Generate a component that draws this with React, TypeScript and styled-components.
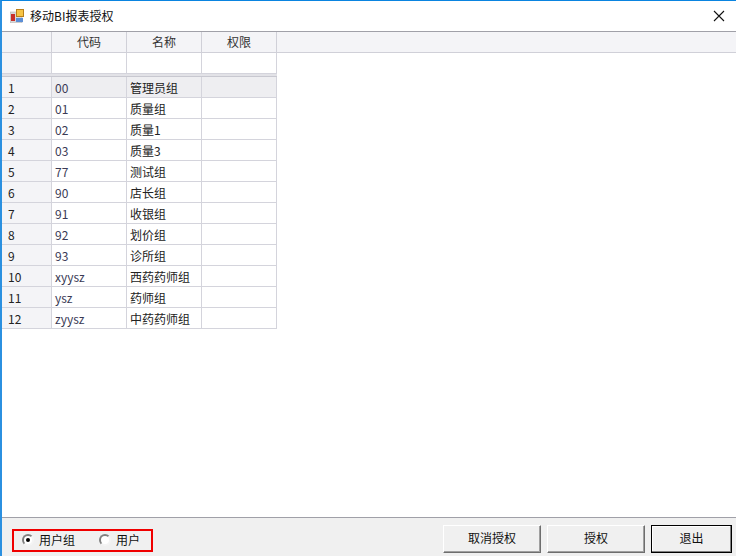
import React from "react";
import styled, { createGlobalStyle } from "styled-components";

const rows = [
  ["00", "管理员组"],
  ["01", "质量组"],
  ["02", "质量1"],
  ["03", "质量3"],
  ["77", "测试组"],
  ["90", "店长组"],
  ["91", "收银组"],
  ["92", "划价组"],
  ["93", "诊所组"],
  ["xyysz", "西药药师组"],
  ["ysz", "药师组"],
  ["zyysz", "中药药师组"],
];

const GlobalStyle = createGlobalStyle`
  html, body {
    margin: 0;
    padding: 0;
    background: #fff;
  }
  * {
    box-sizing: border-box;
  }
`;

const Window = styled.div`
  width: 736px;
  height: 556px;
  display: flex;
  flex-direction: column;
  border-top: 1px solid #0a84e0;
  border-left: 2px solid #2b90e0;
  font-family: "Noto Sans CJK SC", "Liberation Sans", sans-serif;
  font-size: 12px;
  color: #222;
  background: #fff;
  overflow: hidden;
`;

const TitleBar = styled.div`
  height: 31px;
  flex: none;
  display: flex;
  align-items: center;
  padding-left: 8px;
  padding-bottom: 1px;
  gap: 6px;
  border-bottom: 1px solid #a0a0a8;
`;

const TitleText = styled.span`
  flex: 1;
  font-size: 12px;
  color: #111;
`;

const CloseButton = styled.div`
  width: 30px;
  height: 30px;
  display: flex;
  align-items: center;
  justify-content: center;
  margin-right: 2px;
`;

const GridArea = styled.div`
  flex: 1;
  min-height: 0;
  background: #fff;
`;

const Row = styled.div`
  display: grid;
  grid-template-columns: 50px 75px 75px 75px;
  width: 275px;
  height: 21px;
`;

const HeaderRow = styled(Row)`
  width: 734px;
  grid-template-columns: 50px 75px 75px 75px 1fr;
  background: #f4f4f7;
  border-bottom: 1px solid #d0d0d8;
`;

const HeaderCell = styled.div`
  display: flex;
  align-items: center;
  justify-content: center;
  padding-bottom: 1px;
  border-right: 1px solid #d0d0d8;
  color: #333;
  &:last-child {
    border-right: none;
  }
`;

const Separator = styled.div`
  width: 275px;
  height: 3px;
  background: #e2e2e7;
  border-bottom: 1px solid #c8c8d0;
`;

const Cell = styled.div<{ $stub?: boolean; $shaded?: boolean; $code?: boolean }>`
  display: flex;
  align-items: center;
  padding-left: ${(props) => (props.$stub ? 6 : 3)}px;
  border-right: 1px solid #d4d4dc;
  border-bottom: 1px solid #d4d4dc;
  background: ${(props) =>
    props.$stub ? "#f4f4f7" : props.$shaded ? "#eeeef1" : "#fff"};
  color: ${(props) => (props.$code ? "#3a3a55" : "#222")};
  white-space: nowrap;
  overflow: hidden;
`;

const Footer = styled.div`
  height: 39px;
  flex: none;
  display: flex;
  align-items: center;
  justify-content: space-between;
  background: #f0f0f0;
  border-top: 1px solid #a0a0a8;
  padding: 0 4px 0 10px;
`;

const RadioGroup = styled.div`
  width: 141px;
  height: 23px;
  margin-top: 6px;
  display: flex;
  align-items: center;
  gap: 24px;
  padding-left: 8px;
  padding-bottom: 1px;
  border: 2px solid #f00000;
`;

const RadioLabel = styled.label`
  display: flex;
  align-items: center;
  gap: 5px;
  color: #111;
`;

const RadioDot = styled.span<{ $checked?: boolean }>`
  width: 12px;
  height: 12px;
  border-radius: 50%;
  display: flex;
  align-items: center;
  justify-content: center;
  background: #fff;
  border: 2px solid;
  border-color: #808080 #f4f4f4 #f4f4f4 #808080;
  &::after {
    content: "";
    width: 4px;
    height: 4px;
    border-radius: 50%;
    background: ${(props) => (props.$checked ? "#000" : "transparent")};
  }
`;

const Buttons = styled.div`
  display: flex;
  gap: 6px;
  margin-top: 4px;
`;

const Button = styled.div<{ $primary?: boolean }>`
  width: ${(props) => (props.$primary ? 81 : 98)}px;
  height: 28px;
  display: flex;
  align-items: center;
  justify-content: center;
  padding-bottom: 3px;
  background: #f0f0f0;
  color: #111;
  border: 1px solid;
  border-color: ${(props) =>
    props.$primary ? "#000" : "#fff #6e6e6e #6e6e6e #fff"};
  box-shadow: ${(props) =>
    props.$primary
      ? "inset -1px -1px 0 #808080, inset 1px 1px 0 #fff"
      : "inset -1px -1px 0 #a0a0a0"};
`;

const AppIcon = () => (
  <svg width="14" height="14" viewBox="0 0 14 14">
    <rect x="0" y="3" width="12" height="11" fill="#d8d8d8" stroke="#a8a8a8" strokeWidth="0.5" />
    <rect x="6.5" y="0.5" width="7" height="7" fill="#f6c445" stroke="#b9801a" strokeWidth="1" />
    <rect x="1" y="5" width="4" height="7" fill="#c8302a" />
    <rect x="6" y="9" width="7" height="4" fill="#5c8fd6" />
  </svg>
);

const CloseIcon = () => (
  <svg width="12" height="12" viewBox="0 0 12 12">
    <path d="M1 1 L11 11 M11 1 L1 11" stroke="#111" strokeWidth="1.1" fill="none" />
  </svg>
);

const App = () => {
  return (
    <Window>
      <GlobalStyle />
      <TitleBar>
        <AppIcon />
        <TitleText>移动BI报表授权</TitleText>
        <CloseButton>
          <CloseIcon />
        </CloseButton>
      </TitleBar>
      <GridArea>
        <HeaderRow>
          <HeaderCell />
          <HeaderCell>代码</HeaderCell>
          <HeaderCell>名称</HeaderCell>
          <HeaderCell>权限</HeaderCell>
          <HeaderCell />
        </HeaderRow>
        <Row>
          <Cell $stub />
          <Cell />
          <Cell />
          <Cell />
        </Row>
        <Separator />
        {rows.map(([code, name], index) => (
          <Row key={code}>
            <Cell $stub>{index + 1}</Cell>
            <Cell $code $shaded={index === 0}>
              {code}
            </Cell>
            <Cell $shaded={index === 0}>{name}</Cell>
            <Cell $shaded={index === 0} />
          </Row>
        ))}
      </GridArea>
      <Footer>
        <RadioGroup>
          <RadioLabel>
            <RadioDot $checked />
            用户组
          </RadioLabel>
          <RadioLabel>
            <RadioDot />
            用户
          </RadioLabel>
        </RadioGroup>
        <Buttons>
          <Button>取消授权</Button>
          <Button>授权</Button>
          <Button $primary>退出</Button>
        </Buttons>
      </Footer>
    </Window>
  );
};

export default App;
